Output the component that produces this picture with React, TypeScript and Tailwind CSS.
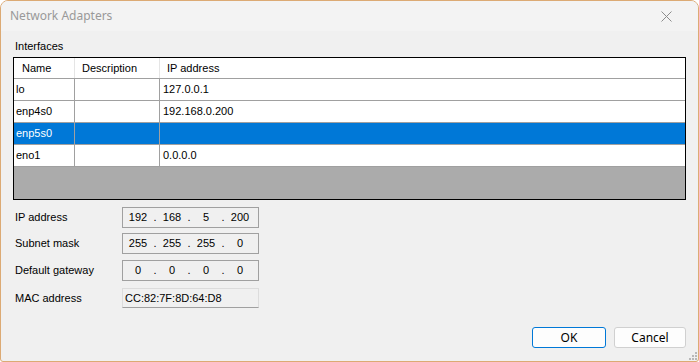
import React from 'react';

// Adapter rows shown in the list view
const adapters = [
  { name: 'lo', description: '', ip: '127.0.0.1' },
  { name: 'enp4s0', description: '', ip: '192.168.0.200' },
  { name: 'enp5s0', description: '', ip: '', selected: true },
  { name: 'eno1', description: '', ip: '0.0.0.0' },
];

function IpBox({ octets }: { octets: string[] }) {
  return (
    <div className="w-[137px] h-[21px] border border-[#a0a0a0] bg-[#f0f0f0] flex items-center pl-[2px]">
      {octets.map((o, i) => (
        <React.Fragment key={i}>
          <span className="w-[26px] text-center">{o}</span>
          {i < 3 && <span className="w-[8px] text-center">.</span>}
        </React.Fragment>
      ))}
    </div>
  );
}

function FieldRow({ label, children, className }: { label: string; children: React.ReactNode; className?: string }) {
  return (
    <div className={`flex items-center ${className ?? ''}`}>
      <span className="w-[109px] pl-[2px]">{label}</span>
      {children}
    </div>
  );
}

export default function App() {
  return (
    <div className="relative w-[699px] h-[362px] flex flex-col border border-[#dcaa74] rounded-t-[8px] rounded-b-[3px] overflow-hidden bg-[#f0f0f0] text-[11px] text-black font-['Liberation_Sans',Arial,sans-serif]">
      {/* Title bar */}
      <div className="h-[30px] shrink-0 flex items-center justify-between bg-[#f3f3f3] pl-[9px] pr-[26px]">
        <span className="text-[12px] text-[#999999] font-['Noto_Sans',sans-serif]">Network Adapters</span>
        <svg width="11" height="11" viewBox="0 0 11 11" className="mt-[1px]">
          <path d="M0.5 0.5 L10.5 10.5 M10.5 0.5 L0.5 10.5" stroke="#8c8c8c" strokeWidth="1" fill="none" />
        </svg>
      </div>

      <div className="flex flex-col flex-1 pl-[12px]">
        <div className="pt-[9px] pl-[2px] h-[26px] leading-[13px]">Interfaces</div>

        {/* List view */}
        <div className="w-[673px] h-[143px] border border-black flex flex-col bg-[#ababab]">
          <div className="h-[21px] shrink-0 flex bg-white border-b border-[#a0a0a0]">
            <div className="w-[61px] border-r border-[#e5e5e5] pl-[8px] flex items-center">Name</div>
            <div className="w-[85px] border-r border-[#e5e5e5] pl-[7px] flex items-center">Description</div>
            <div className="flex-1 pl-[7px] flex items-center">IP address</div>
          </div>
          {adapters.map((a) => (
            <div
              key={a.name}
              className={`h-[22px] shrink-0 flex border-b border-[#a0a0a0] ${a.selected ? 'bg-[#0078d7] text-white' : 'bg-white'}`}
            >
              <div className="w-[61px] border-r border-[#a0a0a0] pl-[2px] flex items-center">{a.name}</div>
              <div className="w-[85px] border-r border-[#a0a0a0] pl-[3px] flex items-center">{a.description}</div>
              <div className="flex-1 pl-[3px] flex items-center">{a.ip}</div>
            </div>
          ))}
        </div>

        {/* Address fields */}
        <FieldRow label="IP address" className="mt-[7px]">
          <IpBox octets={['192', '168', '5', '200']} />
        </FieldRow>
        <FieldRow label="Subnet mask" className="mt-[5px]">
          <IpBox octets={['255', '255', '255', '0']} />
        </FieldRow>
        <FieldRow label="Default gateway" className="mt-[6px]">
          <IpBox octets={['0', '0', '0', '0']} />
        </FieldRow>
        <FieldRow label="MAC address" className="mt-[7px]">
          <div className="w-[137px] h-[20px] border border-[#dcdcdc] border-b-[#a0a0a0] bg-[#f0f0f0] flex items-center pl-[2px]">
            CC:82:7F:8D:64:D8
          </div>
        </FieldRow>

        {/* Buttons */}
        <div className="mt-auto mb-[13px] flex justify-end gap-[8px] pr-[12px] text-[12px] font-['Noto_Sans',sans-serif]">
          <button className="w-[74px] h-[21px] border border-[#0078d7] rounded-[3px] bg-[#fdfdfd] flex items-center justify-center leading-none">
            OK
          </button>
          <button className="w-[72px] h-[21px] border border-[#d0d0d0] rounded-[3px] bg-[#fdfdfd] flex items-center justify-center leading-none">
            Cancel
          </button>
        </div>
      </div>

      {/* Resize grip */}
      <svg width="8" height="8" viewBox="0 0 8 8" className="absolute right-[1px] bottom-[1px]">
        <rect x="6" y="0" width="2" height="2" fill="#b8b8b8" />
        <rect x="3" y="3" width="2" height="2" fill="#b8b8b8" />
        <rect x="6" y="3" width="2" height="2" fill="#b8b8b8" />
        <rect x="0" y="6" width="2" height="2" fill="#b8b8b8" />
        <rect x="3" y="6" width="2" height="2" fill="#b8b8b8" />
        <rect x="6" y="6" width="2" height="2" fill="#b8b8b8" />
      </svg>
    </div>
  );
}
